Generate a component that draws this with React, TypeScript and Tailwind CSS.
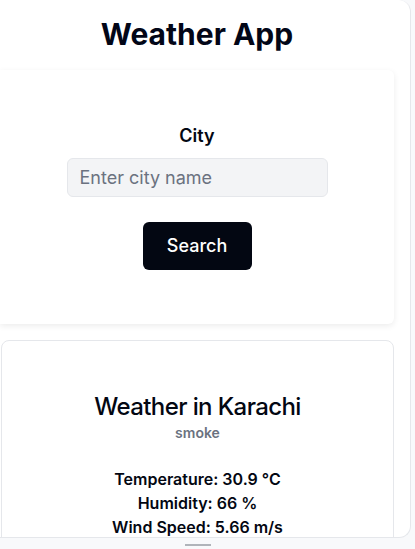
export default function App() {
  return (
    <div className="min-h-screen bg-[#f8f9fb] font-['Inter',sans-serif] text-[#030712]">
      <div className="w-[411px] h-[538px] bg-white border-r border-b border-[#e5e7eb] rounded-br-xl rounded-tr-xl overflow-hidden">
        <div className="w-[394px]">
          <h1 className="pt-4 text-center text-3xl font-bold leading-9 text-[#020617]">Weather App</h1>

          <div className="mt-[18px] h-[254px] bg-white rounded-r-md shadow-[0_2px_6px_rgba(0,0,0,0.08)] pt-[52px] flex flex-col items-center">
            <label className="text-lg font-semibold leading-7">City</label>
            <input
              placeholder="Enter city name"
              className="mt-2 w-[261px] h-[39px] px-3 bg-[#f3f4f6] border border-[#e5e7eb] rounded-md text-lg placeholder:text-[#6b7280] outline-none"
            />
            <button className="mt-[25px] w-[109px] h-12 bg-[#030712] text-white text-lg font-medium rounded-md">
              Search
            </button>
          </div>

          <div className="mt-4 ml-px h-[260px] border border-[#e5e7eb] rounded-lg pt-[50px] text-center">
            <h2 className="text-2xl leading-8 font-medium tracking-tight">Weather in Karachi</h2>
            <p className="text-sm leading-5 font-semibold text-[#6b7280]">smoke</p>
            <div className="mt-6 font-semibold leading-6">
              <p>Temperature: 30.9 °C</p>
              <p>Humidity: 66 %</p>
              <p>Wind Speed: 5.66 m/s</p>
            </div>
          </div>
        </div>
      </div>
      <div className="mt-[6px] ml-[185px] w-[26px] h-[2px] bg-[#b0b4ba]" />
    </div>
  )
}
